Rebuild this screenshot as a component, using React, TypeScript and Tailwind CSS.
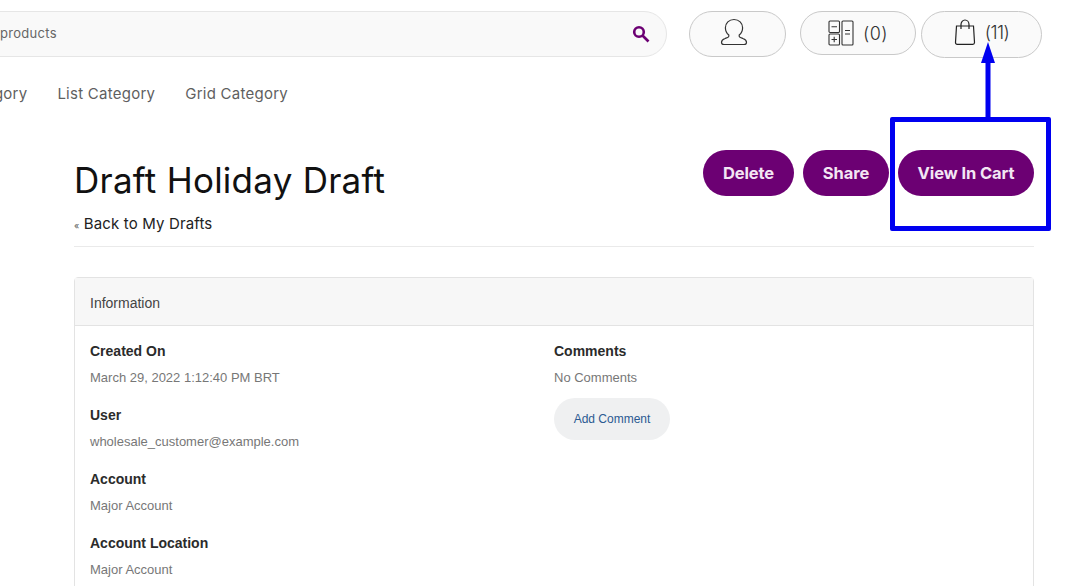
function UserIcon() {
  return (
    <svg className="mr-[8px] mb-[5px]" width="28" height="28" viewBox="0 0 28 28" fill="none" stroke="#333" strokeWidth="1.2">
      <path d="M14 1.500c-5 0-8.600 3.600-8.600 8.300 0 3 1.300 5.600 3.400 7.200v1.300c-.3 1-2 1.500-3.700 2.200C3 21.300 1.500 22.600 1.500 24.200c0 1.500 1 2.300 2.500 2.300h20c1.500 0 2.500-.8 2.500-2.300 0-1.600-1.500-2.900-3.600-3.700-1.700-.7-3.400-1.200-3.700-2.200V17c2.100-1.600 3.400-4.200 3.400-7.200 0-4.700-3.600-8.300-8.600-8.300z" />
    </svg>
  );
}

function CompareIcon() {
  return (
    <svg width="26" height="26" viewBox="0 0 26 26" fill="none" stroke="#333" strokeWidth="1.1">
      <rect x="1" y="1" width="10.500" height="11.500" rx="1" />
      <rect x="1" y="14" width="10.500" height="11" rx="1" />
      <rect x="14" y="1" width="11" height="24" rx="1" />
      <path d="M3.500 6.700h5.500M3.500 19.500h5.500M6.200 16.700v5.500M17 10.500h5M17 14h5" />
    </svg>
  );
}

function BagIcon() {
  return (
    <svg className="mb-[6px]" width="22" height="26" viewBox="0 0 22 26" fill="none" stroke="#222" strokeWidth="1.2">
      <path d="M2.500 7h17l1 16.500c0 1-.7 1.800-1.700 1.800H3.200c-1 0-1.700-.8-1.700-1.800z" />
      <path d="M7 10V5.500C7 3 8.700 1 11 1s4 2 4 4.500V10" />
    </svg>
  );
}

function HeaderButton({ className, children }: { className: string; children: React.ReactNode }) {
  return (
    <div className={`flex items-center justify-center rounded-full border border-[#c9c9c9] bg-[#fafafa] ${className}`}>
      {children}
    </div>
  );
}

function Field({ label, value }: { label: string; value: string }) {
  return (
    <div className="mb-[17px]">
      <div className="text-[14px] leading-[20px] font-bold text-[#2b2b2b]">{label}</div>
      <div className="mt-[7px] text-[13px] leading-[20px] text-[#777]">{value}</div>
    </div>
  );
}

function ActionButton({ className, children }: { className: string; children: React.ReactNode }) {
  return (
    <button className={`h-[46px] rounded-full bg-[#6c0073] text-[16.500px] font-bold tracking-[-0.1px] text-[#f3e6f4] ${className}`}>
      {children}
    </button>
  );
}

export default function App() {
  const poppins = "font-['Inter','Noto_Sans',sans-serif]";
  return (
    <div className="relative h-[586px] w-[1085px] overflow-hidden bg-white font-['Liberation_Sans',Arial,sans-serif]">
      <header className={`flex items-start pt-[11px] ${poppins}`}>
        <div className="-ml-[100px] flex h-[46px] w-[767px] items-center justify-between rounded-full border border-[#e6e6e6] bg-[#f9f9f9] pr-[16px] pl-[50px]">
          <span className="text-[13px] tracking-[0.3px] text-[#666]">Search products</span>
          <svg width="18" height="18" viewBox="0 0 18 18" fill="none" stroke="#6c0073" strokeWidth="2.600">
            <circle cx="7" cy="7" r="4.800" />
            <path d="M10.500 10.500l6 6" />
          </svg>
        </div>
        <HeaderButton className="ml-[22px] h-[46px] w-[97px]">
          <UserIcon />
        </HeaderButton>
        <HeaderButton className="ml-[14px] h-[44px] w-[116px] gap-[9px]">
          <CompareIcon />
          <span className="text-[18px] font-light tracking-[0.5px] text-[#333]">(0)</span>
        </HeaderButton>
        <HeaderButton className="ml-[5px] h-[47px] w-[121px] gap-[9px]">
          <BagIcon />
          <span className="mb-[5px] text-[18px] font-light tracking-[-0.5px] text-[#333]">(11)</span>
        </HeaderButton>
      </header>

      <nav className={`-ml-[40px] mt-[26px] flex gap-[30px] text-[15px] leading-[20px] tracking-[0.25px] text-[#5f5f5f] ${poppins}`}>
        <span>Category</span>
        <span>List Category</span>
        <span>Grid Category</span>
      </nav>

      <main className="ml-[74px] w-[960px]">
        <div className={`mt-[51px] flex items-start justify-between border-b border-[#eaeaea] pb-[9px] ${poppins}`}>
          <div>
            <h1 className="text-[35px] leading-[50px] font-normal tracking-[0.25px] text-[#111]">Draft Holiday Draft</h1>
            <div className="mt-[8px] text-[15px] leading-[22px] tracking-[0.15px] text-[#222]">
              <span className="text-[9px] text-[#555]">«</span> Back to My Drafts
            </div>
          </div>
          <div className="-mt-[5px] flex gap-[9px]">
            <ActionButton className="w-[91px]">Delete</ActionButton>
            <ActionButton className="w-[86px]">Share</ActionButton>
            <ActionButton className="w-[136px]">View In Cart</ActionButton>
          </div>
        </div>

        <section className="mt-[30px] rounded-[4px] border border-[#e3e3e3]">
          <div className="h-[48px] border-b border-[#e3e3e3] bg-[#f7f7f7] px-[15px] text-[14px] leading-[50px] text-[#444]">
            Information
          </div>
          <div className="grid grid-cols-2 px-[15px] pt-[15px]">
            <div>
              <Field label="Created On" value="March 29, 2022 1:12:40 PM BRT" />
              <Field label="User" value="wholesale_customer@example.com" />
              <Field label="Account" value="Major Account" />
              <Field label="Account Location" value="Major Account" />
            </div>
            <div>
              <div className="text-[14px] leading-[20px] font-bold text-[#2b2b2b]">Comments</div>
              <div className="mt-[7px] text-[13px] leading-[20px] text-[#777]">No Comments</div>
              <button className="mt-[10px] h-[42px] w-[116px] rounded-full bg-[#eff0f1] text-[12px] text-[#2b5a92]">
                Add Comment
              </button>
            </div>
          </div>
        </section>
      </main>

      <div className="absolute top-[117px] left-[890px] h-[114px] w-[161px] rounded-[2px] border-[5px] border-[#0000f0]" />
      <svg className="absolute top-[40px] left-[978px]" width="20" height="78" viewBox="0 0 20 78">
        <path d="M10 2L17 23H12.500V78H7.500V23H3z" fill="#0000f0" />
      </svg>
    </div>
  );
}
